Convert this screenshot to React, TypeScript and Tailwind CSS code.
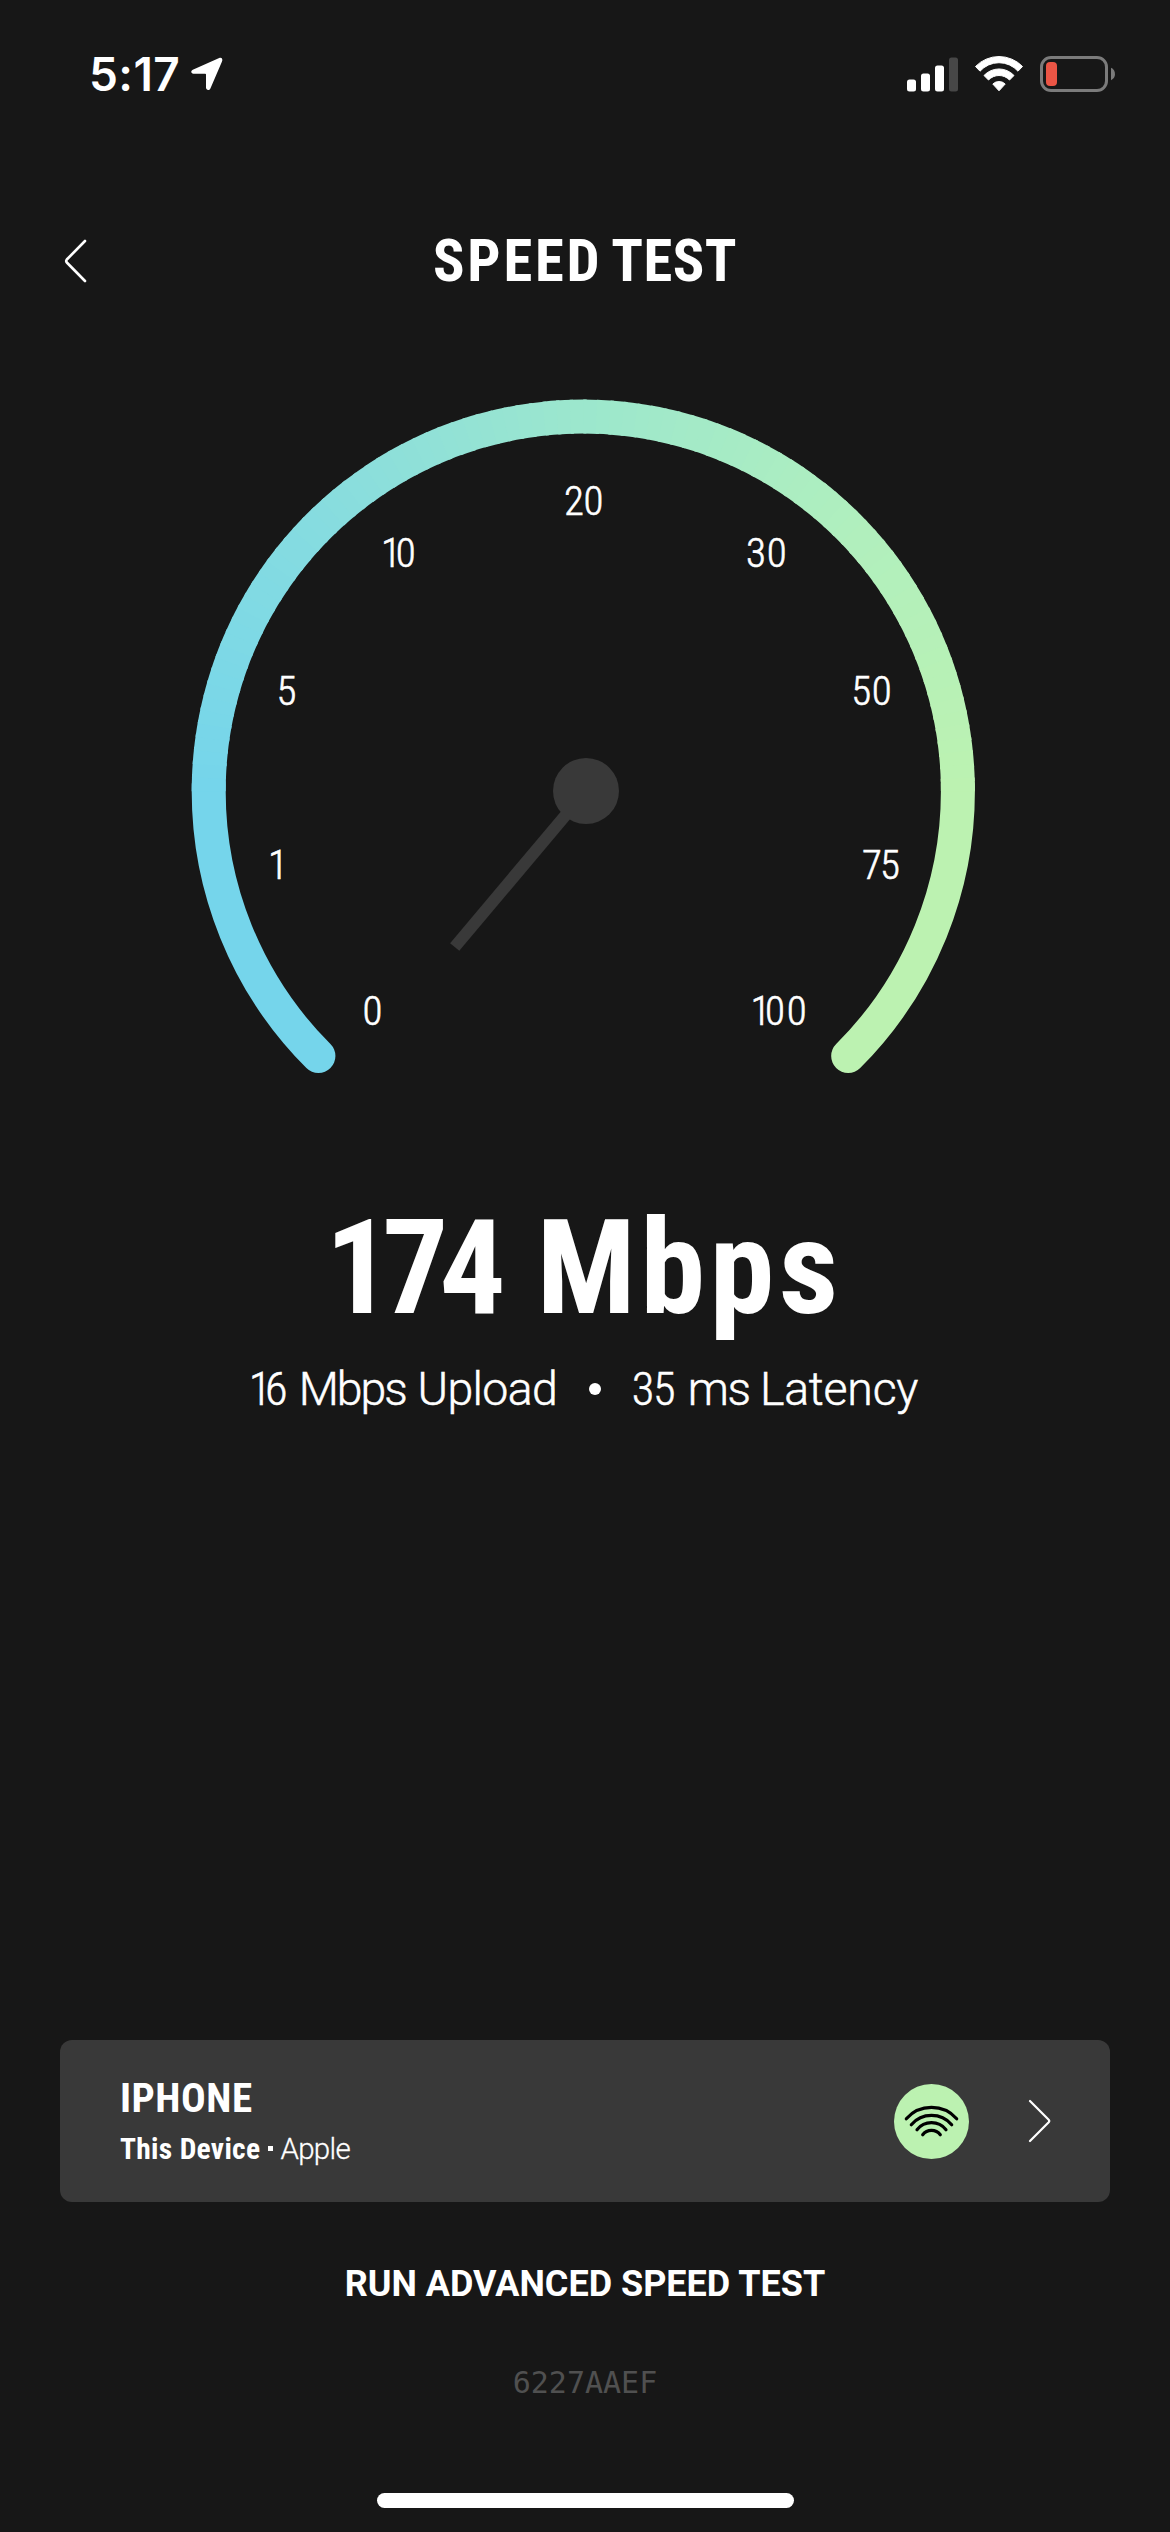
interface GaugeLabel {
  value: string;
  // one x per digit
  x: string;
  y: number;
}

const CENTER_X = 583.3;
const CENTER_Y = 791.2;
const RADIUS = 374.6;
const SEGMENTS = 90;

const LABELS: GaugeLabel[] = [
  { value: "0", x: "362.5", y: 1025 },
  { value: "1", x: "268", y: 878.5 },
  { value: "5", x: "276.5", y: 704.5 },
  { value: "10", x: "381 395.7", y: 567 },
  { value: "20", x: "564 583.5", y: 515 },
  { value: "30", x: "746 766.7", y: 567 },
  { value: "50", x: "851.2 871.7", y: 704.5 },
  { value: "75", x: "862 880", y: 878.5 },
  { value: "100", x: "750.5 765 786.7", y: 1025 },
];

// Color stops over the upper half of the dial, left to right
const STOPS = [
  [117, 213, 235],
  [134, 220, 224],
  [156, 231, 205],
  [176, 239, 190],
  [188, 242, 177],
];

function colorAt(t: number) {
  const pos = Math.min(Math.max(t, 0), 1) * (STOPS.length - 1);
  const i = Math.min(Math.floor(pos), STOPS.length - 2);
  const mix = STOPS[i].map((c, k) => Math.round(c + (STOPS[i + 1][k] - c) * (pos - i)));
  return `rgb(${mix.join(",")})`;
}

function pointAt(degrees: number) {
  const rad = (degrees * Math.PI) / 180;
  return `${(CENTER_X + RADIUS * Math.cos(rad)).toFixed(2)} ${(CENTER_Y + RADIUS * Math.sin(rad)).toFixed(2)}`;
}

function arc(from: number, to: number) {
  return `M${pointAt(from)}A${RADIUS} ${RADIUS} 0 0 1 ${pointAt(to)}`;
}

function StatusBar() {
  return (
    <div className="flex h-[148px] items-center justify-between pr-[54px] pl-[89px]">
      <div className="flex items-center gap-[11px]">
        <span className="font-['Inter',sans-serif] text-[46px] leading-[60px] font-semibold tracking-[0.4px]">
          5:17
        </span>
        <svg width="32" height="34" viewBox="0 0 32 34" fill="#fff">
          <path d="M28.2 1.1 1.8 12.7C-.6 13.8 0 16.8 2.4 16.8H14.2Q15 16.8 15 17.6V30.4C15 33.2 18.2 33.8 19.4 31.4L31 4.6C32 2 30.6 0 28.2 1.1Z" />
        </svg>
      </div>
      <div className="flex items-center">
        <svg width="51" height="38" viewBox="0 0 51 38" fill="#fff">
          <rect x="0" y="24.5" width="9" height="12" rx="2.5" />
          <rect x="14" y="18.5" width="9" height="18" rx="2.5" />
          <rect x="28" y="10.5" width="9" height="26" rx="2.5" />
          <rect x="42" y="2.5" width="9" height="34" rx="2.5" fill="#474747" />
        </svg>
        <svg className="ml-[17px]" width="48" height="38" viewBox="0 0 48 38" fill="#fff" stroke="#fff" strokeWidth="1" strokeLinejoin="round">
          <path d="M.5 11.500A32.700 32.700 0 0 1 47.500 11.500L43 16.200A25.500 25.500 0 0 0 5 16.200Z" />
          <path d="M9 20.500A20.500 20.500 0 0 1 39 20.500L34.500 25A14.500 14.500 0 0 0 13.500 25Z" />
          <path d="M17.800 29A9 9 0 0 1 30.200 29L24 35.800Z" />
        </svg>
        <svg className="ml-[17px]" width="76" height="38" viewBox="0 0 76 38">
          <rect x="1.5" y="2.5" width="65" height="33" rx="9.5" fill="none" stroke="#7b7b7b" strokeWidth="3" />
          <rect x="6" y="7" width="11" height="24" rx="4" fill="#eb5545" />
          <path d="M71 12.800C76.300 15 76.300 23 71 25.200Z" fill="#7b7b7b" />
        </svg>
      </div>
    </div>
  );
}

function Header() {
  return (
    <header className="grid h-[226px] grid-cols-[1fr_auto_1fr] items-center">
      <button className="justify-self-start pl-[64px]" aria-label="Back">
        <svg width="24" height="44" viewBox="0 0 24 44" fill="none" stroke="#fff" strokeWidth="2.6" strokeLinecap="round" strokeLinejoin="round">
          <path d="M21 2 2.800 20.500Q1.600 22 2.800 23.500L21 42" />
        </svg>
      </button>
      <h1 className="flex gap-[9px] font-stretch-[75%] text-[58.6px] leading-[70px] font-bold">
        <span className="tracking-[2.75px]">SPEED</span>
        <span className="tracking-[0.45px]">TEST</span>
      </h1>
    </header>
  );
}

function Gauge() {
  const step = 180 / SEGMENTS;
  return (
    <svg className="mx-auto mt-4 block" width="800" height="700" viewBox="185 390 800 700">
      <g fill="none" strokeWidth="34">
        <path d={arc(135, 181)} stroke={colorAt(0)} strokeLinecap="round" />
        <path d={arc(359, 405)} stroke={colorAt(1)} strokeLinecap="round" />
        {Array.from({ length: SEGMENTS }, (_, i) => (
          <path
            key={i}
            d={arc(180 + i * step, 180 + (i + 1) * step + (i < SEGMENTS - 1 ? 0.5 : 0))}
            stroke={colorAt((i + 0.5) / SEGMENTS)}
          />
        ))}
      </g>
      <path d="M586 791 454.700 947" stroke="#393939" strokeWidth="12" />
      <circle cx="586" cy="791" r="33" fill="#393939" />
      <g className="font-stretch-[75%] text-[41px] font-light" fill="#fff" stroke="#fff" strokeWidth="0.6">
        {LABELS.map((label) => (
          <text key={label.value} x={label.x} y={label.y}>
            {label.value}
          </text>
        ))}
      </g>
    </svg>
  );
}

function Results() {
  return (
    <section className="mt-[108px] flex flex-col items-center">
      <div className="flex gap-[40px] pr-[2px] font-stretch-[75%] text-[131px] leading-[140px] font-bold">
        <span className="tracking-[-9.1px]">174</span>
        <span className="tracking-[4.4px]">Mbps</span>
      </div>
      <div className="mt-[21px] flex items-center pr-[3px] text-[46.4px] leading-[60px] font-light [-webkit-text-stroke:0.5px_white]">
        <span className="font-stretch-[75%] tracking-[-6.4px]">16</span>
        <span className="ml-[17.6px] tracking-[-2px]">Mbps</span>
        <span className="ml-[11.7px] tracking-[-0.6px]">Upload</span>
        <span className="mr-[31px] ml-[31.6px] size-3 rounded-full bg-white" />
        <span className="font-stretch-[75%] tracking-[-1.3px]">35</span>
        <span className="ml-[13.5px] tracking-[-1.5px]">ms</span>
        <span className="ml-[10.4px] tracking-[-0.2px]">Latency</span>
      </div>
    </section>
  );
}

function DeviceCard() {
  return (
    <div className="mx-[60px] mt-auto flex h-[162px] items-center rounded-xl bg-[#393939] pr-[59px] pl-[60px]">
      <div className="flex flex-1 flex-col gap-2 pb-[3px]">
        <div className="font-stretch-[75%] text-[41px] leading-[50px] font-bold tracking-[0.5px]">IPHONE</div>
        <div className="flex items-center text-[29.5px] leading-[36px]">
          <span className="font-stretch-[75%] font-bold tracking-[0.3px]">This Device</span>
          <span className="mr-[7px] ml-2 size-[5px] bg-white" />
          <span className="font-light tracking-[-0.7px] [-webkit-text-stroke:0.3px_white]">Apple</span>
        </div>
      </div>
      <svg width="75" height="75" viewBox="0 0 75 75">
        <circle cx="37.5" cy="37.5" r="37.5" fill="#bcf2b1" />
        <g fill="none" stroke="#000" strokeWidth="3.2" strokeLinecap="round">
          <path d="M12.300 34.700A33.800 33.800 0 0 1 62.700 34.700" />
          <path d="M17.300 40.700A26.600 26.600 0 0 1 57.700 40.700" />
          <path d="M23 45.700A18.500 18.500 0 0 1 52 45.700" />
          <path d="M28.700 50.700A11 11 0 0 1 46.300 50.700" />
        </g>
      </svg>
      <svg className="ml-[59px]" width="23" height="44" viewBox="0 0 23 44" fill="none" stroke="#fff" strokeWidth="2.2" strokeLinecap="round" strokeLinejoin="round">
        <path d="M2 2 20.700 20.800Q21.800 22 20.700 23.200L2 42" />
      </svg>
    </div>
  );
}

export default function App() {
  return (
    <div className="flex h-[2532px] w-[1170px] flex-col overflow-hidden bg-[#171717] font-['Roboto',sans-serif] text-white">
      <StatusBar />
      <Header />
      <Gauge />
      <Results />
      <DeviceCard />
      <button className="mt-[58px] text-[36px] leading-[48px] font-bold">RUN ADVANCED SPEED TEST</button>
      <div className="mt-[55px] text-center font-['DejaVu_Sans_Mono',monospace] text-[30px] leading-[40px] text-[#505050]">
        6227AAEF
      </div>
      <div className="mx-auto mt-[90px] mb-6 h-[15px] w-[417px] shrink-0 rounded-full bg-white" />
    </div>
  );
}
